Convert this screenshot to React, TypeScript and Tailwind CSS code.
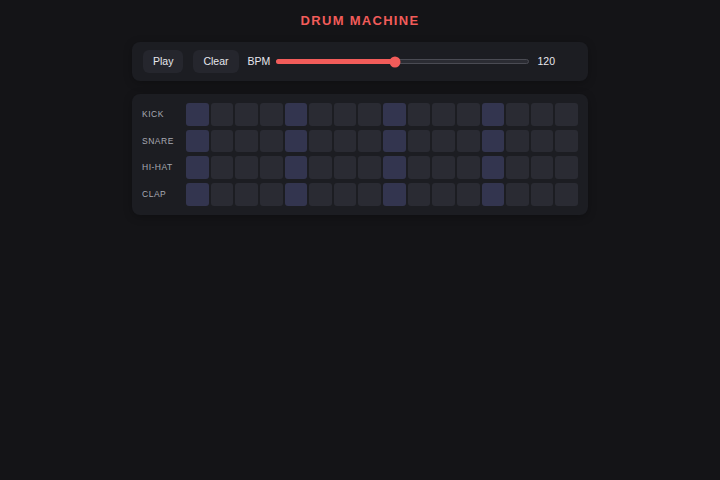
const TRACKS = ["KICK", "SNARE", "HI-HAT", "CLAP"];
const STEPS = Array.from({ length: 16 }, (_, i) => i);

const BPM = 120;
const BPM_MIN = 40;
const BPM_MAX = 210;

export default function App() {
  const pct = ((BPM - BPM_MIN) / (BPM_MAX - BPM_MIN)) * 100;

  return (
    <div
      className="min-h-screen w-full bg-[#141417] pt-[13px] text-[#e4e5ea]"
      style={{ fontFamily: '"Liberation Sans", Arial, sans-serif' }}
    >
      <h1 className="text-center text-[13px] font-bold leading-[16px] tracking-[0.1em] text-[#f25c5a]">
        DRUM MACHINE
      </h1>

      <div className="mx-auto mt-[13px] w-[456px] space-y-[13px]">
        {/* transport */}
        <div className="flex h-[39px] items-center rounded-lg bg-[#1c1d22] pl-[11px] pr-[33px] shadow-[0_2px_8px_rgba(0,0,0,0.25)]">
          <button className="h-[23px] rounded-md bg-[#25262d] px-[10px] text-[10.5px] text-[#e6e7ec]">
            Play
          </button>
          <button className="ml-[10px] h-[23px] rounded-md bg-[#25262d] px-[10px] text-[10.5px] text-[#e6e7ec]">
            Clear
          </button>
          <span className="ml-[9px] text-[10.5px] text-[#e6e7ec]">BPM</span>
          <div className="relative ml-[6px] h-[5px] flex-1 rounded-full border border-[#4a4b53] bg-[#2b2c33]">
            <div
              className="absolute inset-y-[-1px] left-[-1px] rounded-full bg-[#f25c5a]"
              style={{ width: `${pct}%` }}
            />
            <div
              className="absolute top-1/2 h-[11px] w-[11px] -translate-x-1/2 -translate-y-1/2 rounded-full bg-[#f25c5a]"
              style={{ left: `${pct}%` }}
            />
          </div>
          <span className="ml-[8px] text-[10.5px] text-[#e6e7ec]">{BPM}</span>
        </div>

        {/* sequencer */}
        <div className="flex flex-col gap-[4px] rounded-lg bg-[#1c1d22] px-[10px] py-[9px] shadow-[0_2px_8px_rgba(0,0,0,0.25)]">
          {TRACKS.map((name) => (
            <div key={name} className="flex items-center">
              <span className="w-[44px] text-[8.5px] tracking-[0.06em] text-[#a8aab2]">{name}</span>
              <div className="grid flex-1 grid-cols-16 gap-[2px]">
                {STEPS.map((s) => (
                  <div
                    key={s}
                    className={
                      s % 4 === 0
                        ? "aspect-square rounded-[3px] bg-[#33354f]"
                        : "aspect-square rounded-[3px] bg-[#2a2b33]"
                    }
                  />
                ))}
              </div>
            </div>
          ))}
        </div>
      </div>
    </div>
  );
}
